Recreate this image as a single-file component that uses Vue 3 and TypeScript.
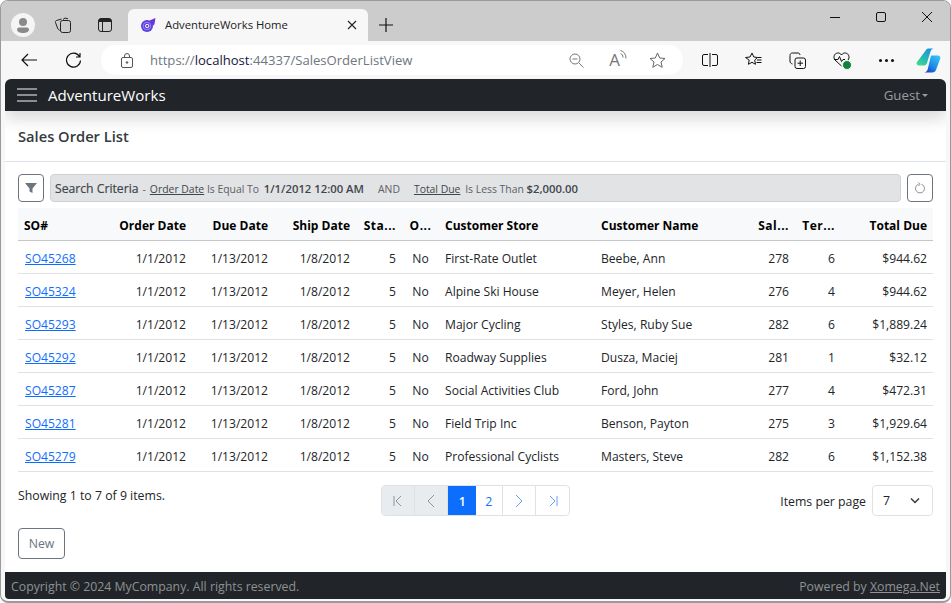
<script setup lang="ts">
interface Order {
  so: string
  orderDate: string
  shipDate: string
  store: string
  customer: string
  sales: number
  territory: number
  total: string
}

const orders: Order[] = [
  { so: 'SO45268', orderDate: '1/1/2012', shipDate: '1/8/2012', store: 'First-Rate Outlet', customer: 'Beebe, Ann', sales: 278, territory: 6, total: '$944.62' },
  { so: 'SO45324', orderDate: '1/1/2012', shipDate: '1/8/2012', store: 'Alpine Ski House', customer: 'Meyer, Helen', sales: 276, territory: 4, total: '$944.62' },
  { so: 'SO45293', orderDate: '1/1/2012', shipDate: '1/8/2012', store: 'Major Cycling', customer: 'Styles, Ruby Sue', sales: 282, territory: 6, total: '$1,889.24' },
  { so: 'SO45292', orderDate: '1/1/2012', shipDate: '1/8/2012', store: 'Roadway Supplies', customer: 'Dusza, Maciej', sales: 281, territory: 1, total: '$32.12' },
  { so: 'SO45287', orderDate: '1/1/2012', shipDate: '1/8/2012', store: 'Social Activities Club', customer: 'Ford, John', sales: 277, territory: 4, total: '$472.31' },
  { so: 'SO45281', orderDate: '1/1/2012', shipDate: '1/8/2012', store: 'Field Trip Inc', customer: 'Benson, Payton', sales: 275, territory: 3, total: '$1,929.64' },
  { so: 'SO45279', orderDate: '1/1/2012', shipDate: '1/8/2012', store: 'Professional Cyclists', customer: 'Masters, Steve', sales: 282, territory: 6, total: '$1,152.38' },
]
</script>

<template>
  <div class="window">
    <div class="tabstrip">
      <div class="avatar">
        <svg width="24" height="24" viewBox="0 0 24 24"><circle cx="12" cy="12" r="12" fill="#f5f5f5" /><circle cx="12" cy="9" r="4" fill="#8a8a8a" /><path d="M6 16.5c0-1.2 1-2 2-2h8c1 0 2 .8 2 2 0 2.500-3 3.500-6 3.500s-6-1-6-3.500z" fill="#8a8a8a" /></svg>
      </div>
      <svg class="strip-icon first" width="18" height="18" viewBox="0 0 18 18" fill="none" stroke="#222"><rect x="6.500" y="4.500" width="10" height="12" rx="2" /><path d="M6.500 14.500c-1.500-.5-2.500-1-3-2.500L1.500 6.500c-.3-1 .2-1.800 1-2l5-1.500M9 3.500l2-1.500 3 .8" /></svg>
      <svg class="strip-icon second" width="16" height="16" viewBox="0 0 16 16" fill="none" stroke="#222"><rect x="1.500" y="1.500" width="13" height="13" rx="2.500" /><rect x="2" y="2" width="12" height="3" fill="#222" stroke="none" /><path d="M5.500 4v10" /></svg>
      <div class="tab">
        <svg width="16" height="16" viewBox="0 0 16 16" fill="none"><circle cx="7" cy="9" r="6" fill="#5a3ee0" /><circle cx="7" cy="9" r="3.800" stroke="#a79af0" stroke-width=".8" /><circle cx="7.200" cy="9" r="1.700" stroke="#fff" stroke-width="1" /><path d="M9.500 3.500L15.500 1 14.500 7c-.5 1-1 1.500-1.500 1.500z" fill="#6a35d9" /></svg>
        <span class="tab-title">AdventureWorks Home</span>
        <svg class="tab-close" width="10" height="10" viewBox="0 0 10 10" stroke="#222" stroke-width="1.100"><path d="M1 1l8 8M9 1l-8 8" /></svg>
      </div>
      <svg class="plus" width="14" height="14" viewBox="0 0 14 14" stroke="#111" stroke-width="1.200"><path d="M7 0v14M0 7h14" /></svg>
      <div class="window-controls">
        <svg width="10" height="10" viewBox="0 0 10 10" stroke="#111"><path d="M0 5.500h10" /></svg>
        <svg width="10" height="10" viewBox="0 0 10 10" fill="none" stroke="#111"><rect x=".5" y=".5" width="9" height="9" rx="1.500" /></svg>
        <svg width="10" height="10" viewBox="0 0 10 10" stroke="#111"><path d="M0 0l10 10M10 0L0 10" /></svg>
      </div>
    </div>

    <div class="toolbar">
      <svg class="back" width="16" height="14" viewBox="0 0 16 14" fill="none" stroke="#111" stroke-width="1.200"><path d="M16 7H1M7 1L1 7l6 6" /></svg>
      <svg class="reload" width="17" height="17" viewBox="0 0 17 17" fill="none" stroke="#111" stroke-width="1.200"><path d="M14.500 4.500A7 7 0 1 0 15.500 8.500M15 1v4h-4" /></svg>
      <div class="address">
        <svg width="12" height="15" viewBox="0 0 12 15" fill="none" stroke="#555"><rect x=".5" y="4.500" width="11" height="10" rx="1.500" /><path d="M3.500 4.500V3a2.500 2.500 0 0 1 5 0v1.500" /><circle cx="6" cy="9.500" r=".8" fill="#555" /></svg>
        <span class="url">https://<b>localhost</b>:44337/SalesOrderListView</span>
        <svg class="addr-zoom" width="15" height="15" viewBox="0 0 15 15" fill="none" stroke="#777"><circle cx="6" cy="6" r="5" /><path d="M3.500 6h5M9.700 9.700L14.500 14.500" /></svg>
        <span class="read">A<svg width="7" height="10" viewBox="0 0 7 10" fill="none" stroke="#777"><path d="M.5 .5c3.500 1 5.500 3.500 5.500 8M.5 3.500c1.500.5 2.500 2 2.500 4" /></svg></span>
        <svg width="17" height="17" viewBox="0 0 17 17" fill="none" stroke="#666"><path d="M8.500 1l2.200 5 5.300.5-4 3.500 1.200 5.300-4.700-2.800-4.700 2.800L5 10 1 6.500 6.300 6z" /></svg>
      </div>
      <div class="tools">
        <svg width="16" height="14" viewBox="0 0 16 14" fill="none" stroke="#111"><path d="M8 0v14M6 1.500H2A1.500 1.500 0 0 0 .5 3v8A1.500 1.500 0 0 0 2 12.500h4M10 1.500h4A1.500 1.500 0 0 1 15.500 3v8a1.500 1.500 0 0 1-1.500 1.500h-4" /></svg>
        <svg width="17" height="16" viewBox="0 0 17 16" fill="none" stroke="#111"><path d="M7 1l1.800 4 3.700.5-2.800 2.600.8 4.200-3.500-2-3.600 2 .8-4.200L.5 5.500 5 5zM12 8h4.500M12.500 5.500h4M11.500 10.500h5" /></svg>
        <svg width="17" height="17" viewBox="0 0 17 17" fill="none" stroke="#111"><rect x="6" y="6" width="10.500" height="10.500" rx="2" /><path d="M11.200 8.500v5.500M8.500 11.200H14M3.500 12c-1.500-.5-2.500-1-2.500-3V3.500C1 2 2 1 3.500 1H9c1 0 1.800.5 2 2" /></svg>
        <span class="health">
          <svg width="17" height="16" viewBox="0 0 17 16" fill="none" stroke="#111"><path d="M8.500 14L2 8C0 5.500 1 1.500 4.500 1c1.700-.2 3 .5 4 2 1-1.500 2.300-2.200 4-2 3.500.5 4.500 4.500 2.500 7M1 7.500h4l1.500-3 2 5 1.500-2h2" /></svg>
          <i class="health-dot"></i>
        </span>
        <span class="more"><i></i><i></i><i></i></span>
        <svg class="copilot" width="25" height="25" viewBox="0 0 25 25">
          <defs>
            <linearGradient id="cpa" x1=".8" y1="0" x2=".2" y2="1"><stop offset="0" stop-color="#1f8fe0" /><stop offset=".55" stop-color="#22b8b8" /><stop offset="1" stop-color="#3ed98a" /></linearGradient>
            <linearGradient id="cpb" x1=".9" y1="0" x2=".2" y2="1"><stop offset="0" stop-color="#38c6f4" /><stop offset=".6" stop-color="#1f8ae8" /><stop offset="1" stop-color="#1a3fc8" /></linearGradient>
          </defs>
          <path d="M15 7.500h7c1.800 0 2.800 1.500 2.300 3L20 22c-.5 1.500-2 2.500-3.500 2.500H8c1.500 0 3-1.500 3.500-2.500z" fill="url(#cpb)" />
          <path d="M10 2c.5-1 1.500-1.500 2.500-1.500H18c-2 0-3 1.500-3.500 3L11 15c-.5 1.500-1.500 2.500-3 2.500H3c-1.800 0-2.800-1.500-2.300-3z" fill="url(#cpa)" />
        </svg>
      </div>
    </div>

    <div class="app">
      <nav class="navbar">
        <span class="burger"><i></i><i></i><i></i></span>
        <span class="brand">AdventureWorks</span>
        <span class="guest">Guest<i class="caret"></i></span>
      </nav>

      <main class="content">
        <h1 class="view-title">Sales Order List</h1>
        <div class="view-body">
          <div class="criteria-row">
            <button class="icon-btn">
              <svg width="12" height="12" viewBox="0 0 12 12"><path d="M0 1h12L7.500 6.500V11l-3-1.500v-3z" fill="#6c757d" /></svg>
            </button>
            <div class="criteria">
              <span class="criteria-head">Search Criteria</span>
              <span class="dash">-</span>
              <u>Order Date</u> <span>Is Equal To</span> <b class="first-value">1/1/2012 12:00 AM</b>
              <span class="and">AND</span>
              <u>Total Due</u> <span class="second-op">Is Less Than</span> <b>$2,000.00</b>
            </div>
            <button class="icon-btn">
              <svg width="12" height="12" viewBox="0 0 12 12" fill="none" stroke="#8a9299"><path d="M7.500 2.200a4.500 4.500 0 1 1-3 0M4.500 .5l1.500 1.700L4.500 4" /></svg>
            </button>
          </div>

          <table class="grid">
            <colgroup>
              <col style="width: 86px" /><col style="width: 88px" /><col style="width: 82px" /><col style="width: 82px" />
              <col style="width: 46px" /><col style="width: 37px" /><col style="width: 156px" /><col style="width: 150px" />
              <col style="width: 50px" /><col style="width: 46px" /><col style="width: 92px" />
            </colgroup>
            <thead>
              <tr>
                <th>SO#</th>
                <th class="num">Order Date</th>
                <th class="num">Due Date</th>
                <th class="num">Ship Date</th>
                <th class="num cut">Sta...</th>
                <th class="mid cut">O...</th>
                <th>Customer Store</th>
                <th>Customer Name</th>
                <th class="num cut">Sal...</th>
                <th class="num cut">Ter...</th>
                <th class="num">Total Due</th>
              </tr>
            </thead>
            <tbody>
              <tr v-for="o in orders" :key="o.so">
                <td><a href="#">{{ o.so }}</a></td>
                <td class="num">{{ o.orderDate }}</td>
                <td class="num">1/13/2012</td>
                <td class="num">{{ o.shipDate }}</td>
                <td class="num">5</td>
                <td class="mid">No</td>
                <td>{{ o.store }}</td>
                <td>{{ o.customer }}</td>
                <td class="num">{{ o.sales }}</td>
                <td class="num">{{ o.territory }}</td>
                <td class="num">{{ o.total }}</td>
              </tr>
            </tbody>
          </table>

          <div class="pager-row">
            <div class="summary">Showing 1 to 7 of 9 items.</div>
            <div class="pager">
              <span class="page off edge">
                <svg width="12" height="12" viewBox="0 0 12 12" fill="none" stroke="#8c949b"><path d="M2 1v10M9 1L4 6l5 5" /></svg>
              </span>
              <span class="page off step">
                <svg width="12" height="14" viewBox="0 0 12 14" fill="none" stroke="#8c949b"><path d="M9 1L3 7l6 6" /></svg>
              </span>
              <span class="page active">1</span>
              <span class="page num-page">2</span>
              <span class="page step">
                <svg width="12" height="14" viewBox="0 0 12 14" fill="none" stroke="#6b9ff5"><path d="M3 1l6 6-6 6" /></svg>
              </span>
              <span class="page edge">
                <svg width="12" height="12" viewBox="0 0 12 12" fill="none" stroke="#6b9ff5"><path d="M10 1v10M3 1l5 5-5 5" /></svg>
              </span>
            </div>
            <div class="per-page">
              <span class="per-label">Items per page</span>
              <div class="select">
                <span>7</span>
                <svg width="12" height="8" viewBox="0 0 12 8" fill="none" stroke="#343a40" stroke-width="1.500"><path d="M2 1.500l4 4 4-4" /></svg>
              </div>
            </div>
          </div>

          <button class="new-btn">New</button>
        </div>
      </main>

      <footer class="footer">
        <span>Copyright © 2024 MyCompany. All rights reserved.</span>
        <span>Powered by <u>Xomega.Net</u></span>
      </footer>
    </div>
  </div>
</template>

<style scoped>
.window {
  width: 951px;
  height: 603px;
  box-sizing: border-box;
  display: flex;
  flex-direction: column;
  background: #f7f7f7;
  border: 1px solid #9a9a9a;
  border-bottom-width: 2px;
  border-radius: 8px;
  overflow: hidden;
  font-family: "Open Sans", "Noto Sans", sans-serif;
  font-size: 12.3px;
  color: #212529;
}

.tabstrip {
  height: 40px;
  flex: none;
  box-sizing: border-box;
  padding-top: 8px;
  background: #cccccc;
  display: flex;
  align-items: center;
}
.avatar {
  width: 24px;
  height: 24px;
  margin-left: 10px;
  display: flex;
}
.strip-icon.first {
  margin-left: 19px;
}
.strip-icon.second {
  margin-left: 25px;
}
.tab {
  align-self: stretch;
  width: 240px;
  margin-left: 15px;
  box-sizing: border-box;
  background: #f7f7f7;
  border-radius: 6px 6px 0 0;
  display: flex;
  align-items: center;
  padding: 0 11px 0 12px;
}
.tab-title {
  margin: 0 0 2px 9px;
  flex: 1;
  font-size: 11.3px;
  color: #222;
}
.plus {
  margin-left: 11px;
}
.window-controls {
  margin-left: auto;
  margin-right: 18px;
  margin-top: -16px;
  display: flex;
  gap: 36px;
}

.toolbar {
  height: 38px;
  flex: none;
  box-sizing: border-box;
  display: flex;
  align-items: center;
  background: #f7f7f7;
}
.back {
  margin-left: 20px;
}
.reload {
  margin-left: 28px;
}
.address {
  width: 582px;
  height: 30px;
  margin-left: 19px;
  box-sizing: border-box;
  border-radius: 15px;
  background: #fff;
  display: flex;
  align-items: center;
  padding: 0 17px 0 20px;
  gap: 14px;
}
.url {
  flex: 1;
  margin-left: 3px;
  font-size: 13.1px;
  color: #6e7680;
}
.url b {
  font-weight: 400;
  color: #16183a;
}
.read {
  display: flex;
  font-size: 17px;
  line-height: 20px;
  color: #777;
  margin: 0 8px;
}
.addr-zoom {
  margin-right: 3px;
}
.tools {
  display: flex;
  align-items: center;
  margin-left: 19px;
  gap: 27px;
}
.health {
  position: relative;
  display: flex;
}
.health-dot {
  position: absolute;
  right: -2px;
  bottom: -2px;
  width: 8px;
  height: 8px;
  border-radius: 50%;
  background: #12813c;
  border: 1px solid #f7f7f7;
}
.more {
  display: flex;
  gap: 3px;
  margin-left: 2px;
}
.more i {
  width: 3px;
  height: 3px;
  border-radius: 50%;
  background: #111;
}
.copilot {
  margin-left: -5px;
}

.app {
  flex: 1;
  margin: 0 4px 2px;
  min-height: 0;
  display: flex;
  flex-direction: column;
  background: #fff;
  border-radius: 6px 6px 4px 4px;
  overflow: hidden;
}
.navbar {
  height: 32px;
  flex: none;
  display: flex;
  align-items: center;
  background: #212529;
  box-shadow: 0 8px 16px rgba(0, 0, 0, 0.15);
  position: relative;
  padding: 0 18px 0 12px;
}
.burger {
  width: 20px;
  display: flex;
  flex-direction: column;
  gap: 4px;
}
.burger i {
  height: 2px;
  background: #8c8f92;
}
.brand {
  margin-left: 11px;
  color: #fff;
  font-size: 15.1px;
}
.guest {
  margin-left: auto;
  color: #9a9da0;
  font-size: 13.3px;
  display: flex;
  align-items: center;
}
.caret {
  margin-left: 2px;
  border-top: 3px solid #9a9da0;
  border-left: 3px solid transparent;
  border-right: 3px solid transparent;
}

.content {
  flex: 1;
  min-height: 0;
  display: flex;
  flex-direction: column;
}
.view-title {
  margin: 0;
  height: 51px;
  flex: none;
  box-sizing: border-box;
  padding: 15px 13px 0;
  border-bottom: 1px solid #dee2e6;
  font-size: 14.7px;
  line-height: 20px;
  font-weight: 600;
  color: #343a40;
}
.view-body {
  padding: 12px 13px 0;
}
.criteria-row {
  display: flex;
  gap: 6px;
  height: 28px;
}
.icon-btn {
  width: 26px;
  height: 28px;
  padding: 0;
  flex: none;
  background: #fff;
  border: 1px solid #6c757d;
  border-radius: 4px;
  display: flex;
  align-items: center;
  justify-content: center;
}
.criteria {
  flex: 1;
  box-sizing: border-box;
  background: #e2e3e5;
  border: 1px solid #cfd1d4;
  border-radius: 4px;
  padding: 0 4px;
  font-size: 10.4px;
  line-height: 28px;
  color: #5c6166;
  white-space: pre-wrap;
}
.criteria-head {
  font-size: 12.2px;
  color: #41464b;
  -webkit-text-stroke: 0.2px #41464b;
}
.criteria u {
  color: #41464b;
}
.criteria b {
  font-size: 11.3px;
  font-weight: 600;
  color: #41464b;
}
.dash {
  margin: 0 4px;
}
.first-value {
  margin-left: 2px;
}
.and {
  margin: 0 14px 0 14px;
}
.second-op {
  margin-left: 2px;
}

.grid {
  width: 915px;
  margin-top: 6px;
  border-collapse: collapse;
  table-layout: fixed;
}
.grid th {
  height: 30px;
  padding: 2px 6px 0;
  background: #f8f9fa;
  border-bottom: 1px solid #c4c7ca;
  font-size: 12px;
  font-weight: 700;
  color: #000;
  text-align: left;
  white-space: nowrap;
  overflow: hidden;
}
.grid th.cut {
  letter-spacing: 0.5px;
}
.grid td {
  height: 30px;
  padding: 2px 6px 0;
  border-bottom: 1px solid #dee2e6;
  font-size: 12.1px;
  white-space: nowrap;
  overflow: hidden;
}
.grid .num {
  text-align: right;
}
.grid .mid {
  text-align: center;
}
.grid a {
  margin-left: 1px;
  color: #0d6efd;
  text-decoration: underline;
}

.pager-row {
  display: flex;
  margin-top: 13px;
  height: 31px;
}
.summary {
  width: 363px;
  padding-top: 1px;
  line-height: 20px;
}
.pager {
  width: 189px;
  height: 31px;
  box-sizing: border-box;
  display: flex;
  border: 1px solid #dee2e6;
  border-radius: 4px;
  overflow: hidden;
}
.page {
  display: flex;
  align-items: center;
  justify-content: center;
  border-right: 1px solid #dee2e6;
  box-sizing: border-box;
  color: #0d6efd;
  height: 100%;
}
.page:last-child {
  border-right: 0;
}
.off {
  background: #e9ecef;
}
.edge {
  width: 33px;
}
.step {
  width: 34px;
}
.active {
  width: 28px;
  padding-top: 2px;
  background: #0d6efd;
  color: #fff;
  border-right: 0;
  font-weight: 600;
}
.num-page {
  width: 27px;
  padding-top: 2px;
}
.per-page {
  margin-left: auto;
  display: flex;
  align-items: center;
  gap: 6px;
}
.per-label {
  padding-top: 2px;
}
.select {
  width: 61px;
  height: 31px;
  box-sizing: border-box;
  border: 1px solid #dee2e6;
  border-radius: 4px;
  display: flex;
  align-items: center;
  justify-content: space-between;
  padding: 0 11px 0 10px;
}
.new-btn {
  display: block;
  margin-top: 12px;
  width: 47px;
  height: 31px;
  padding: 0;
  background: #fff;
  border: 1px solid #6c757d;
  border-radius: 4px;
  font: inherit;
  color: #6c757d;
}

.footer {
  height: 27px;
  flex: none;
  box-sizing: border-box;
  display: flex;
  justify-content: space-between;
  align-items: center;
  padding: 1px 6px 0;
  background: #212529;
  color: #8f9194;
}
</style>

<style>
html,
body {
  margin: 0;
  background: #fff;
}
</style>
